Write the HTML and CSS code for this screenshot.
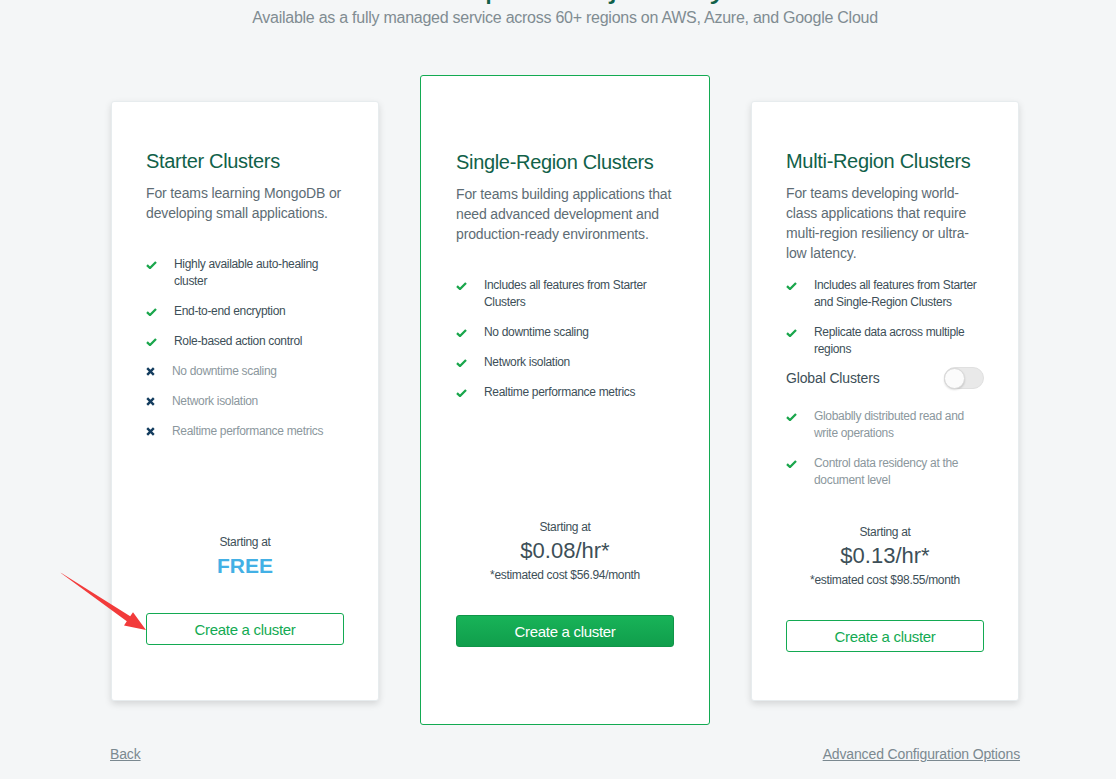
FILE: index.html
```html
<!DOCTYPE html>
<html lang="en">
<head>
<meta charset="utf-8">
<title>Choose a path</title>
<link rel="stylesheet" href="styles.css">
</head>
<body>
<div class="page">
  <header class="intro">
    <h1 class="intro-title">Choose a path. Adjust anytime.</h1>
    <p class="intro-sub">Available as a fully managed service across 60+ regions on AWS, Azure, and Google Cloud</p>
  </header>

  <main class="plans">
    <section class="card card-side card-starter">
      <h2 class="card-title">Starter Clusters</h2>
      <p class="card-desc">For teams learning MongoDB or developing small applications.</p>
      <ul class="features">
        <li class="feat"><span class="ico ico-check"><svg width="11" height="8" viewBox="0 0 11 8"><path d="M1 4.2 L4 7 L10 1" fill="none" stroke="#1aa64c" stroke-width="2.3"/></svg></span><span>Highly available auto-healing cluster</span></li>
        <li class="feat"><span class="ico ico-check"><svg width="11" height="8" viewBox="0 0 11 8"><path d="M1 4.2 L4 7 L10 1" fill="none" stroke="#1aa64c" stroke-width="2.3"/></svg></span><span>End-to-end encryption</span></li>
        <li class="feat"><span class="ico ico-check"><svg width="11" height="8" viewBox="0 0 11 8"><path d="M1 4.2 L4 7 L10 1" fill="none" stroke="#1aa64c" stroke-width="2.3"/></svg></span><span>Role-based action control</span></li>
        <li class="feat feat-off"><span class="ico ico-x"><svg width="9" height="9" viewBox="0 0 9 9"><path d="M1.2 1.2 L7.8 7.8 M7.8 1.2 L1.2 7.8" fill="none" stroke="#133c5e" stroke-width="2.4"/></svg></span><span>No downtime scaling</span></li>
        <li class="feat feat-off"><span class="ico ico-x"><svg width="9" height="9" viewBox="0 0 9 9"><path d="M1.2 1.2 L7.8 7.8 M7.8 1.2 L1.2 7.8" fill="none" stroke="#133c5e" stroke-width="2.4"/></svg></span><span>Network isolation</span></li>
        <li class="feat feat-off"><span class="ico ico-x"><svg width="9" height="9" viewBox="0 0 9 9"><path d="M1.2 1.2 L7.8 7.8 M7.8 1.2 L1.2 7.8" fill="none" stroke="#133c5e" stroke-width="2.4"/></svg></span><span>Realtime performance metrics</span></li>
      </ul>
      <div class="pricing">
        <div class="pricing-label">Starting at</div>
        <div class="pricing-free">FREE</div>
      </div>
      <button class="btn btn-outline btn-starter">Create a cluster</button>
    </section>

    <section class="card card-featured">
      <h2 class="card-title">Single-Region Clusters</h2>
      <p class="card-desc">For teams building applications that need advanced development and production-ready environments.</p>
      <ul class="features">
        <li class="feat"><span class="ico ico-check"><svg width="11" height="8" viewBox="0 0 11 8"><path d="M1 4.2 L4 7 L10 1" fill="none" stroke="#1aa64c" stroke-width="2.3"/></svg></span><span>Includes all features from Starter Clusters</span></li>
        <li class="feat"><span class="ico ico-check"><svg width="11" height="8" viewBox="0 0 11 8"><path d="M1 4.2 L4 7 L10 1" fill="none" stroke="#1aa64c" stroke-width="2.3"/></svg></span><span>No downtime scaling</span></li>
        <li class="feat"><span class="ico ico-check"><svg width="11" height="8" viewBox="0 0 11 8"><path d="M1 4.2 L4 7 L10 1" fill="none" stroke="#1aa64c" stroke-width="2.3"/></svg></span><span>Network isolation</span></li>
        <li class="feat"><span class="ico ico-check"><svg width="11" height="8" viewBox="0 0 11 8"><path d="M1 4.2 L4 7 L10 1" fill="none" stroke="#1aa64c" stroke-width="2.3"/></svg></span><span>Realtime performance metrics</span></li>
      </ul>
      <div class="pricing">
        <div class="pricing-label">Starting at</div>
        <div class="pricing-price">$0.08/hr*</div>
        <div class="pricing-est">*estimated cost $56.94/month</div>
      </div>
      <button class="btn btn-solid">Create a cluster</button>
    </section>

    <section class="card card-side card-multi">
      <h2 class="card-title">Multi-Region Clusters</h2>
      <p class="card-desc card-desc-tight">For teams developing world-class applications that require multi-region resiliency or ultra-low latency.</p>
      <ul class="features">
        <li class="feat"><span class="ico ico-check"><svg width="11" height="8" viewBox="0 0 11 8"><path d="M1 4.2 L4 7 L10 1" fill="none" stroke="#1aa64c" stroke-width="2.3"/></svg></span><span>Includes all features from Starter and Single-Region Clusters</span></li>
        <li class="feat"><span class="ico ico-check"><svg width="11" height="8" viewBox="0 0 11 8"><path d="M1 4.2 L4 7 L10 1" fill="none" stroke="#1aa64c" stroke-width="2.3"/></svg></span><span>Replicate data across multiple regions</span></li>
      </ul>
      <div class="global-row">
        <span class="global-label">Global Clusters</span>
        <span class="toggle"><span class="toggle-knob"></span></span>
      </div>
      <ul class="features features-global">
        <li class="feat feat-dim"><span class="ico ico-check"><svg width="11" height="8" viewBox="0 0 11 8"><path d="M1 4.2 L4 7 L10 1" fill="none" stroke="#1aa64c" stroke-width="2.3"/></svg></span><span>Globablly distributed read and write operations</span></li>
        <li class="feat feat-dim"><span class="ico ico-check"><svg width="11" height="8" viewBox="0 0 11 8"><path d="M1 4.2 L4 7 L10 1" fill="none" stroke="#1aa64c" stroke-width="2.3"/></svg></span><span>Control data residency at the document level</span></li>
      </ul>
      <div class="pricing">
        <div class="pricing-label">Starting at</div>
        <div class="pricing-price">$0.13/hr*</div>
        <div class="pricing-est">*estimated cost $98.55/month</div>
      </div>
      <button class="btn btn-outline">Create a cluster</button>
    </section>
  </main>

  <footer class="footer">
    <a class="footer-link" href="#">Back</a>
    <a class="footer-link" href="#">Advanced Configuration Options</a>
  </footer>
</div>

<svg class="annotation-arrow" width="100" height="75" viewBox="55 565 100 75">
  <polygon fill="#f23b3b" points="60.5,572.5 61.5,573.5 126.8,621.3 124,625.4 146,630 133,612.2 130.2,616.3"/>
</svg>
</body>
</html>
```

FILE: styles.css
```css
* {
  box-sizing: border-box;
}

html, body {
  margin: 0;
  padding: 0;
}

body {
  background: #f4f6f7;
  font-family: "Liberation Sans", Arial, sans-serif;
  color: #3d4f58;
  letter-spacing: -0.02em;
  width: 1116px;
  height: 779px;
  overflow: hidden;
  position: relative;
}

.page {
  width: 908px;
  margin-left: 111px;
}

.intro {
  text-align: center;
}

.intro-title {
  margin: -35px 0 0;
  font-size: 34px;
  line-height: 40px;
  font-weight: 400;
  color: #116149;
  letter-spacing: 0;
}

.intro-sub {
  margin: 3px 0 0;
  font-size: 16px;
  line-height: 20px;
  color: #808c92;
  letter-spacing: -0.016em;
}

.plans {
  display: flex;
  align-items: flex-start;
  gap: 41px;
  margin-top: 47px;
}

.card {
  background: #ffffff;
  border: 1px solid #e7ecee;
  border-radius: 3px;
  display: flex;
  flex-direction: column;
  padding: 47px 34px 55px;
}

.card-side {
  width: 268px;
  height: 600px;
  margin-top: 26px;
  box-shadow: 0 3px 7px rgba(0, 0, 0, 0.13);
}

.card-multi {
  padding-bottom: 48px;
}

.card-featured {
  width: 290px;
  height: 650px;
  border-color: #13aa52;
  padding: 74px 35px 77px;
}

.card-title {
  margin: 0;
  font-size: 20px;
  line-height: 24px;
  font-weight: 400;
  color: #116149;
}

.card-desc {
  margin: 10px 0 33px;
  font-size: 14px;
  line-height: 20px;
  color: #5d6c74;
  letter-spacing: -0.01em;
}

.card-desc-tight {
  margin-bottom: 14px;
}

.features {
  list-style: none;
  margin: 0;
  padding: 0;
  display: flex;
  flex-direction: column;
  gap: 13px;
}

.feat {
  display: flex;
  align-items: flex-start;
  font-size: 12px;
  line-height: 17px;
  color: #3d4f58;
}

.feat-off,
.feat-dim {
  color: #8b979d;
}

.ico {
  flex: none;
  width: 28px;
  height: 17px;
  display: flex;
  align-items: center;
}

.ico-x {
  width: 26px;
}

.ico svg {
  display: block;
}

.global-row {
  display: flex;
  align-items: center;
  justify-content: space-between;
  height: 22px;
  margin: 9px 0 19px;
}

.global-label {
  font-size: 14px;
  line-height: 20px;
  color: #3d4f58;
  letter-spacing: -0.01em;
}

.toggle {
  width: 40px;
  height: 22px;
  border-radius: 11px;
  background: #e9e9e9;
  border: 1px solid #e0e0e0;
  display: flex;
  align-items: center;
}

.toggle-knob {
  width: 21px;
  height: 21px;
  margin-left: -1px;
  border-radius: 50%;
  background: #fbfbfb;
  border: 1px solid #d8d8d8;
  box-shadow: 0 1px 2px rgba(0, 0, 0, 0.15);
}

.pricing {
  margin-top: auto;
  text-align: center;
}

.pricing-label {
  font-size: 12px;
  line-height: 16px;
  color: #3d4f58;
}

.pricing-price {
  font-size: 22px;
  line-height: 32px;
  color: #3d4f58;
  letter-spacing: 0;
}

.pricing-free {
  font-size: 21px;
  line-height: 32px;
  font-weight: 700;
  color: #43b0e5;
  letter-spacing: 0;
}

.pricing-est {
  font-size: 12px;
  line-height: 16px;
  color: #3d4f58;
}

.btn {
  display: block;
  width: 100%;
  height: 32px;
  margin-top: 32px;
  border-radius: 3px;
  font-family: "Liberation Sans", Arial, sans-serif;
  font-size: 15px;
  letter-spacing: -0.02em;
  cursor: pointer;
  padding: 0;
}

.btn-starter {
  margin-top: 31px;
}

.btn-outline {
  background: #ffffff;
  border: 1px solid #13aa52;
  color: #13aa52;
}

.btn-solid {
  background: linear-gradient(#18b358, #109e4c);
  border: 1px solid #0f9548;
  color: #ffffff;
}

.footer {
  display: flex;
  justify-content: space-between;
  margin-top: 19px;
}

.footer-link {
  font-size: 14px;
  line-height: 20px;
  color: #7b8990;
  text-decoration: underline;
  letter-spacing: -0.01em;
}

.footer-link:first-child {
  margin-left: -1px;
}

.footer-link:last-child {
  margin-right: -1px;
}

.annotation-arrow {
  position: absolute;
  left: 55px;
  top: 565px;
  pointer-events: none;
}
```
